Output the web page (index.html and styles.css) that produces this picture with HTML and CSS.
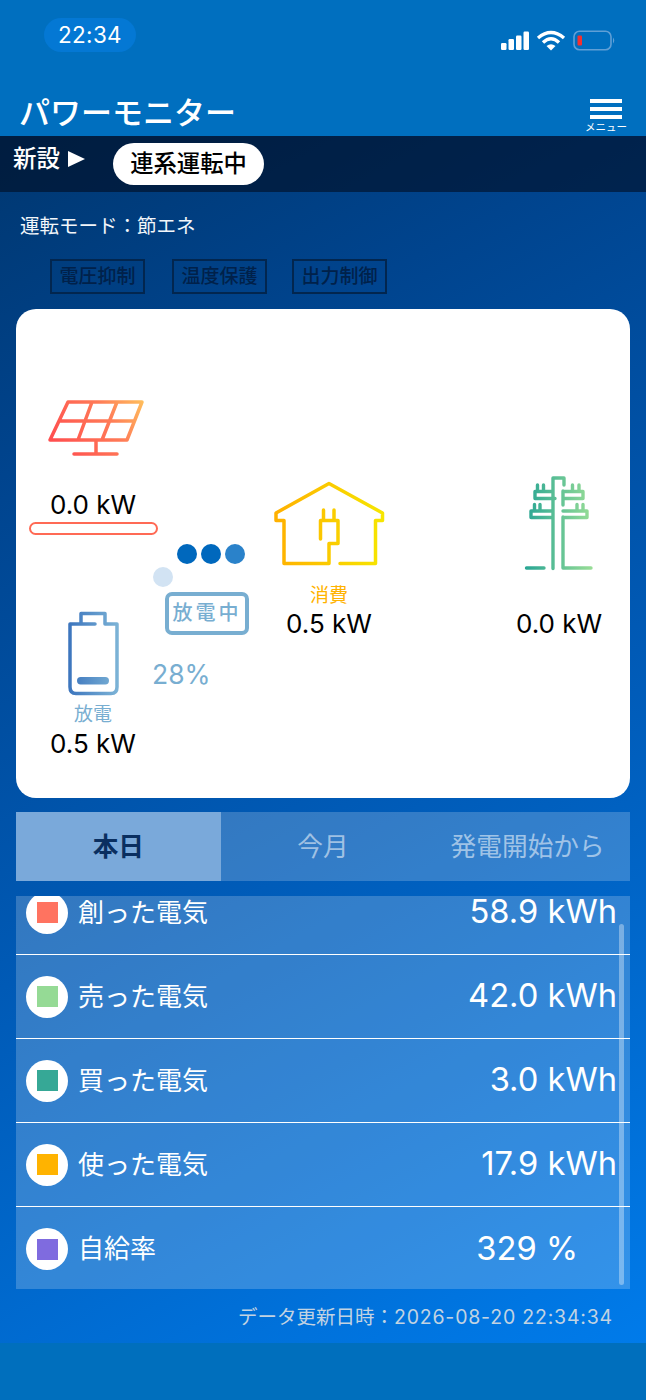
FILE: index.html
```html
<!DOCTYPE html>
<html lang="ja">
<head>
<meta charset="utf-8">
<title>パワーモニター</title>
<link rel="stylesheet" href="styles.css">
</head>
<body>
<div class="app">
  <header class="top">
    <div class="status">
      <div class="clock">22:34</div>
      <svg class="status-icons" width="116" height="22" viewBox="0 0 116 22">
        <g fill="#fff">
          <rect x="1" y="13" width="5.500" height="7" rx="1.200"/>
          <rect x="8.500" y="9" width="5.500" height="11" rx="1.200"/>
          <rect x="16" y="5.500" width="5.500" height="14.500" rx="1.200"/>
          <rect x="23.500" y="1.500" width="5.500" height="18.500" rx="1.200"/>
        </g>
        <g fill="none" stroke="#fff" stroke-width="3.400">
          <path d="M38 8 Q51 -3 64 8"/>
          <path d="M43 12.500 Q51 5 59 12.500"/>
        </g>
        <path d="M46.500 16 Q51 12.500 55.500 16 L51 20.500 Z" fill="#fff"/>
        <rect x="74" y="1.200" width="37" height="18.600" rx="5.500" fill="none" stroke="#5f9fd6" stroke-width="1.600"/>
        <rect x="77.500" y="5.500" width="4.500" height="10" rx="1" fill="#f5302f"/>
        <path d="M113 7.500 Q115.500 10.500 113 13.500 Z" fill="#5f9fd6"/>
      </svg>
    </div>
    <div class="titlebar">
      <h1 class="title">パワーモニター</h1>
      <div class="menu">
        <span class="menu-line"></span>
        <span class="menu-line"></span>
        <span class="menu-line"></span>
        <span class="menu-label">メニュー</span>
      </div>
    </div>
  </header>

  <main class="main">
    <div class="statebar">
      <div class="state-new">新設<span class="state-arrow"></span></div>
      <div class="state-pill">連系運転中</div>
    </div>
    <p class="mode">運転モード：節エネ</p>
    <div class="badges">
      <span class="badge">電圧抑制</span>
      <span class="badge">温度保護</span>
      <span class="badge">出力制御</span>
    </div>

    <section class="card">
      <svg class="node solar-icon" width="100" height="60" viewBox="48 398 100 60">
        <defs>
          <linearGradient id="gSolar" gradientUnits="userSpaceOnUse" x1="60" y1="450" x2="142" y2="398">
            <stop offset="0" stop-color="#ff4f4f"/><stop offset=".6" stop-color="#ff7b57"/><stop offset="1" stop-color="#ffbe5c"/>
          </linearGradient>
        </defs>
        <path d="M68 401H142L127 439H50ZM59 420H134.500M92 401L78 439M117 401L102 439M96 439V453M74 453H117" fill="none" stroke="url(#gSolar)" stroke-width="3.500" stroke-linecap="round" stroke-linejoin="round"/>
      </svg>
      <div class="node value solar-value">0.0 kW</div>
      <div class="node solar-bar"></div>

      <span class="node dot dot-a"></span>
      <span class="node dot dot-b"></span>
      <span class="node dot dot-c"></span>
      <span class="node dot dot-d"></span>
      <div class="node discharging">放電中</div>
      <div class="node percent">28%</div>

      <svg class="node battery-icon" width="54" height="86" viewBox="66 610 54 86">
        <defs>
          <linearGradient id="gBatt" gradientUnits="userSpaceOnUse" x1="68" y1="650" x2="118" y2="650">
            <stop offset="0" stop-color="#3b74bd"/><stop offset="1" stop-color="#7cb3d6"/>
          </linearGradient>
        </defs>
        <path d="M95 623H70V686Q70 692.500 76 692.500H111Q117 692.500 117 686V623H105V612.500H81V623" fill="none" stroke="url(#gBatt)" stroke-width="3.500" stroke-linecap="round" stroke-linejoin="round"/>
        <rect x="77" y="676" width="32" height="7.500" rx="3.700" fill="url(#gBatt)"/>
      </svg>
      <div class="node sub sub-batt">放電</div>
      <div class="node value batt-value">0.5 kW</div>

      <svg class="node house-icon" width="112" height="86" viewBox="273 481 112 86">
        <defs>
          <linearGradient id="gHouse" gradientUnits="userSpaceOnUse" x1="275" y1="520" x2="384" y2="520">
            <stop offset="0" stop-color="#ffb000"/><stop offset="1" stop-color="#f6e600"/>
          </linearGradient>
        </defs>
        <path d="M340 563.500H375.500V520.500H382.500V513L329 483.500L276 513V520.500H284V563.500H329V543.500H338V520.500H320.500V539M323.500 520.500V510M334 520.500V510" fill="none" stroke="url(#gHouse)" stroke-width="3.500" stroke-linecap="round" stroke-linejoin="round"/>
      </svg>
      <div class="node sub sub-home">消費</div>
      <div class="node value home-value">0.5 kW</div>

      <svg class="node pole-icon" width="72" height="98" viewBox="523 475 72 98">
        <defs>
          <linearGradient id="gPole" gradientUnits="userSpaceOnUse" x1="526" y1="520" x2="592" y2="520">
            <stop offset="0" stop-color="#2aa694"/><stop offset="1" stop-color="#98dd96"/>
          </linearGradient>
        </defs>
        <path d="M526.500 568H544M553 568.500V478H564V485M563 491V505M563 517V568H591M553 491.500H535V498.500H555M553 511H531V517.500H553M563 491.500H583V498.500H563M563 511H587V517.500H563M537.500 491V485M543.500 491V485M534.500 511V504.500M540 511V504.500M572.500 491V485M579 491V485M577 511V504.500M583 511V504.500" fill="none" stroke="url(#gPole)" stroke-width="3.400" stroke-linecap="round" stroke-linejoin="round"/>
      </svg>
      <div class="node value grid-value">0.0 kW</div>
    </section>

    <nav class="tabs">
      <div class="tab tab-active">本日</div>
      <div class="tab">今月</div>
      <div class="tab">発電開始から</div>
    </nav>

    <section class="list">
      <div class="rows">
        <div class="row">
          <span class="swatch"><i class="sq sq-red"></i></span>
          <span class="label">創った電気</span>
          <span class="amount">58.9 kWh</span>
        </div>
        <div class="row">
          <span class="swatch"><i class="sq sq-green"></i></span>
          <span class="label">売った電気</span>
          <span class="amount">42.0 kWh</span>
        </div>
        <div class="row">
          <span class="swatch"><i class="sq sq-teal"></i></span>
          <span class="label">買った電気</span>
          <span class="amount">3.0 kWh</span>
        </div>
        <div class="row">
          <span class="swatch"><i class="sq sq-amber"></i></span>
          <span class="label">使った電気</span>
          <span class="amount">17.9 kWh</span>
        </div>
        <div class="row row-last">
          <span class="swatch"><i class="sq sq-purple"></i></span>
          <span class="label">自給率</span>
          <span class="amount amount-rate">329 %</span>
        </div>
      </div>
      <div class="scrollbar"></div>
    </section>

    <p class="updated">データ更新日時：<span class="stamp">2026-08-20 22:34:34</span></p>
  </main>
</div>
</body>
</html>
```
FILE: styles.css
```css
* { box-sizing: border-box; }
html, body { margin: 0; padding: 0; }
body {
  font-family: Inter, "Noto Sans CJK JP", sans-serif;
  background: #006fbd;
  color: #fff;
}
.app { width: 646px; height: 1400px; overflow: hidden; background: #006fbd; }

.top { height: 136px; background: #006fbf; }
.status { display: flex; justify-content: space-between; align-items: flex-start; padding: 18px 30px 0 44px; height: 86px; }
.clock { width: 92px; height: 34px; border-radius: 17px; background: #0478d4; font-size: 22.500px; line-height: 34px; text-align: center; letter-spacing: .3px; }
.status-icons { margin-top: 12px; }

.titlebar { display: flex; justify-content: space-between; padding: 0 18px 0 19px; height: 50px; }
.title { margin: 0; font-size: 31px; line-height: 54px; font-weight: 500; white-space: nowrap; }
.menu { width: 44px; display: flex; flex-direction: column; align-items: center; padding-top: 13px; gap: 4px; }
.menu-line { width: 32px; height: 4px; background: #fff; flex: none; }
.menu-label { font-size: 10.500px; line-height: 10px; white-space: nowrap; }

.main { height: 1207px; background: linear-gradient(152deg, #003770 0%, #00448e 22%, #005ab6 55%, #007bea 100%); }

.statebar { height: 56px; background: rgba(0, 10, 30, .58); display: flex; align-items: flex-start; padding-left: 13px; }
.state-new { display: flex; align-items: center; font-size: 23.500px; line-height: 30px; font-weight: 500; margin-top: 8px; width: 100px; }
.state-arrow { width: 0; height: 0; margin-left: 8px; border-left: 17px solid #fff; border-top: 8px solid transparent; border-bottom: 8px solid transparent; }
.state-pill { margin-top: 7px; width: 151px; height: 42px; border-radius: 21px; background: #fff; color: #000; font-size: 23.300px; line-height: 42px; font-weight: 500; text-align: center; white-space: nowrap; }

.mode { margin: 20px 0 0 20px; font-size: 19.500px; line-height: 28px; color: #f2f6fa; }
.badges { display: flex; gap: 25px; padding: 19px 0 0 50px; }
.badge { width: 95px; height: 35px; border: 2px solid #02264f; color: #00214a; font-size: 19px; font-weight: 500; line-height: 31px; text-align: center; white-space: nowrap; }
.badge:first-child { margin-right: 2px; }

.card { position: relative; height: 489px; margin: 15px 16px 0; background: #fff; border-radius: 20px; color: #000; }
.node { position: absolute; }
.solar-icon { left: 32px; top: 90px; }
.value { width: 120px; text-align: center; font-size: 26px; line-height: 32px; }
.solar-value { left: 17px; top: 180px; }
.solar-bar { left: 13px; top: 213px; width: 129px; height: 13px; border: 2px solid #ff6a55; border-radius: 7px; }
.dot { width: 20px; height: 20px; border-radius: 50%; }
.dot-a { left: 161px; top: 235px; background: #0068bd; }
.dot-b { left: 185px; top: 235px; background: #0068bd; }
.dot-c { left: 209px; top: 235px; background: #2a82ca; }
.dot-d { left: 137px; top: 258px; background: #d2e3f3; }
.discharging { left: 149px; top: 283px; width: 84px; height: 43px; border: 4px solid #78aed1; border-radius: 7px; color: #78aed1; font-size: 20px; line-height: 34px; font-weight: 500; text-align: center; letter-spacing: 3px; white-space: nowrap; }
.percent { left: 136px; top: 349px; font-size: 26.500px; line-height: 32px; color: #78aed1; }
.battery-icon { left: 50px; top: 302px; }
.sub { width: 80px; text-align: center; font-size: 19px; line-height: 26px; }
.sub-batt { left: 37px; top: 393px; color: #78aed1; }
.batt-value { left: 17px; top: 419px; }
.house-icon { left: 257px; top: 172px; }
.sub-home { left: 273px; top: 274px; color: #ffb300; }
.home-value { left: 253px; top: 299px; }
.pole-icon { left: 507px; top: 166px; }
.grid-value { left: 483px; top: 299px; }

.tabs { display: flex; height: 69px; margin: 14px 16px 0; background: rgba(255, 255, 255, .2); }
.tab { flex: 1; text-align: center; font-size: 25.700px; line-height: 69px; color: rgba(255, 255, 255, .55); white-space: nowrap; }
.tab-active { background: #7aa9da; color: #0a2f60; font-weight: 700; }

.list { position: relative; height: 393px; margin: 15px 16px 0; background: rgba(255, 255, 255, .2); overflow: hidden; }
.rows { margin-top: -25px; }
.row { display: flex; align-items: center; height: 84px; padding: 0 13px 0 10px; border-bottom: 1px solid #fff; }
.row-last { border-bottom: 0; }
.swatch { width: 42px; height: 42px; border-radius: 50%; background: #fff; display: flex; align-items: center; justify-content: center; flex: none; }
.sq { display: block; width: 21px; height: 21px; }
.sq-red { background: #ff7360; }
.sq-green { background: #95da95; }
.sq-teal { background: #36a896; }
.sq-amber { background: #ffb300; }
.sq-purple { background: #7f6bdf; }
.label { margin-left: 10px; font-size: 26px; line-height: 30px; white-space: nowrap; }
.amount { margin-left: auto; margin-bottom: 3px; font-size: 32.700px; line-height: 30px; white-space: nowrap; }
.amount-rate { margin-right: 39px; }
.scrollbar { position: absolute; right: 6px; top: 28px; width: 5px; height: 361px; border-radius: 3px; background: rgba(255, 255, 255, .35); }

.updated { margin: 14px 33px 0 0; text-align: right; font-size: 19.500px; line-height: 28px; color: #c2d3e2; white-space: nowrap; }
.stamp { letter-spacing: .8px; }
```
